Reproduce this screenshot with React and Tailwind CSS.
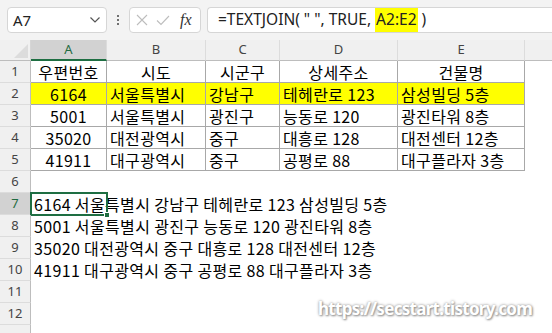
import React from "react";

const KR = { fontFamily: '"Noto Sans CJK KR", "Noto Sans", sans-serif', letterSpacing: "0.35px" };
const UI = { fontFamily: '"Noto Sans", "Open Sans", sans-serif' };

const cols = [
  { k: "A", w: "w-[76px]" },
  { k: "B", w: "w-[99px]" },
  { k: "C", w: "w-[74px]" },
  { k: "D", w: "w-[118px]" },
  { k: "E", w: "w-[127px]" },
];

const table = [
  ["우편번호", "시도", "시군구", "상세주소", "건물명"],
  ["6164", "서울특별시", "강남구", "테헤란로 123", "삼성빌딩 5층"],
  ["5001", "서울특별시", "광진구", "능동로 120", "광진타워 8층"],
  ["35020", "대전광역시", "중구", "대흥로 128", "대전센터 12층"],
  ["41911", "대구광역시", "중구", "공평로 88", "대구플라자 3층"],
];

const joined = [
  "6164 서울특별시 강남구 테헤란로 123 삼성빌딩 5층",
  "5001 서울특별시 광진구 능동로 120 광진타워 8층",
  "35020 대전광역시 중구 대흥로 128 대전센터 12층",
  "41911 대구광역시 중구 공평로 88 대구플라자 3층",
];

function RowHead({ n, active }) {
  return (
    <div
      className={`w-[31px] h-[22px] shrink-0 flex items-center justify-center border-r border-r-[#bdbdbd] border-b border-b-[#dcdcdc] text-[13px] ${
        active ? "bg-[#d2d2d2] text-[#1f6b41]" : "bg-[#f0f0f0] text-[#444]"
      }`}
      style={UI}
    >
      {n}
    </div>
  );
}

export default function App() {
  return (
    <div className="w-[552px] h-[333px] bg-white overflow-hidden relative select-none">
      {/* top formula bar */}
      <div className="h-[40px] bg-[#f3f3f3] flex items-center pl-[7px] gap-0">
        <div className="w-[100px] h-[26px] bg-white border border-[#d6d6d6] rounded-[4px] flex items-center justify-between pl-[5px] pr-[5px]" style={UI}>
          <span className="text-[15px] text-[#222]">A7</span>
          <svg width="12" height="8" viewBox="0 0 12 8"><path d="M1.5 1.5 L6 6 L10.5 1.5" fill="none" stroke="#555" strokeWidth="1.2" /></svg>
        </div>
        <div className="w-[22px] flex flex-col items-center justify-center gap-[2px]">
          <div className="w-[2px] h-[2px] bg-[#444] rounded-full" />
          <div className="w-[2px] h-[2px] bg-[#444] rounded-full" />
          <div className="w-[2px] h-[2px] bg-[#444] rounded-full" />
        </div>
        <div className="w-[72px] h-[26px] bg-white border border-[#d6d6d6] rounded-[4px] flex items-center pl-[6px] gap-[8px]">
          <svg width="12" height="12" viewBox="0 0 12 12"><path d="M1 1 L11 11 M11 1 L1 11" stroke="#bdbdbd" strokeWidth="1.1" /></svg>
          <svg width="14" height="11" viewBox="0 0 14 11"><path d="M1 5.5 L5 9.5 L13 1" fill="none" stroke="#bdbdbd" strokeWidth="1.1" /></svg>
          <span className="italic text-[16px] text-[#333] leading-none ml-[2px]" style={{ fontFamily: '"Liberation Serif", serif' }}>fx</span>
        </div>
        <div className="ml-[6px] flex-1 h-[26px] bg-white border border-[#d6d6d6] rounded-l-[4px] border-r-0 flex items-center pl-[10px] text-[15.5px] text-[#222] whitespace-nowrap" style={UI}>
          <span>=TEXTJOIN( " ", TRUE,&nbsp;</span>
          <span className="bg-[#ffff00] px-[1px]">A2:E2</span>
          <span>&nbsp;)</span>
        </div>
      </div>

      {/* column headers */}
      <div className="flex h-[21px]">
        <div className="w-[31px] h-[21px] shrink-0 bg-[#f0f0f0] border-r border-[#d6d6d6] border-b border-b-[#bdbdbd] relative">
          <svg className="absolute right-[2px] bottom-[2px]" width="14" height="14" viewBox="0 0 14 14"><path d="M14 0 L14 14 L0 14 Z" fill="#dcdcdc" /></svg>
        </div>
        {cols.map((c, i) => (
          <div
            key={c.k}
            className={`${c.w} shrink-0 flex items-center justify-center text-[13px] border-r border-r-[#dcdcdc] ${
              i === 0 ? "bg-[#d2d2d2] text-[#1f6b41] border-b-2 border-b-[#1e6e42]" : "bg-[#f0f0f0] text-[#444] border-b border-b-[#bdbdbd]"
            }`}
            style={UI}
          >
            {c.k}
          </div>
        ))}
        <div className="flex-1 bg-[#f0f0f0] border-b border-b-[#bdbdbd]" />
      </div>

      {/* table rows */}
      {table.map((row, r) => (
        <div key={r} className="flex h-[22px]">
          <RowHead n={r + 1} />
          {row.map((v, i) => (
            <div
              key={i}
              className={`${cols[i].w} shrink-0 h-[22px] border-r border-b border-[#a8a8a8] flex items-center text-[16px] text-black whitespace-nowrap overflow-hidden ${
                r === 0 || i === 0 ? "justify-center" : "pl-[3px]"
              } ${r === 1 ? "bg-[#ffff00]" : ""}`}
              style={KR}
            >
              {v}
            </div>
          ))}
        </div>
      ))}

      {/* row 6 */}
      <div className="flex h-[22px]">
        <RowHead n={6} />
      </div>

      {/* joined rows */}
      {joined.map((t, i) => (
        <div key={i} className="flex h-[22px] relative">
          <RowHead n={7 + i} active={i === 0} />
          <div className="flex items-center pl-[3px] text-[16px] text-black whitespace-nowrap" style={KR}>
            {t}
          </div>
          {i === 0 && (
            <div className="absolute left-[30px] top-[-1px] w-[78px] h-[24px] border-2 border-[#1e6e42]">
              <div className="absolute right-[-4px] bottom-[-4px] w-[6px] h-[6px] bg-[#1e6e42] border border-white" />
            </div>
          )}
        </div>
      ))}

      <div className="flex h-[22px]"><RowHead n={11} /></div>
      <div className="flex h-[22px]"><RowHead n={12} /></div>
      <div className="flex h-[22px]"><RowHead n="" /></div>

      {/* watermark */}
      <div
        className="absolute left-[318px] top-[296px] text-[17px] font-bold text-white whitespace-nowrap tracking-[-0.7px]"
        style={{ fontFamily: '"Noto Sans", sans-serif', textShadow: "0 0 3px #8a8a8a, 1px 1px 2px #9a9a9a" }}
      >
        https://secstart.tistory.com
      </div>
    </div>
  );
}
